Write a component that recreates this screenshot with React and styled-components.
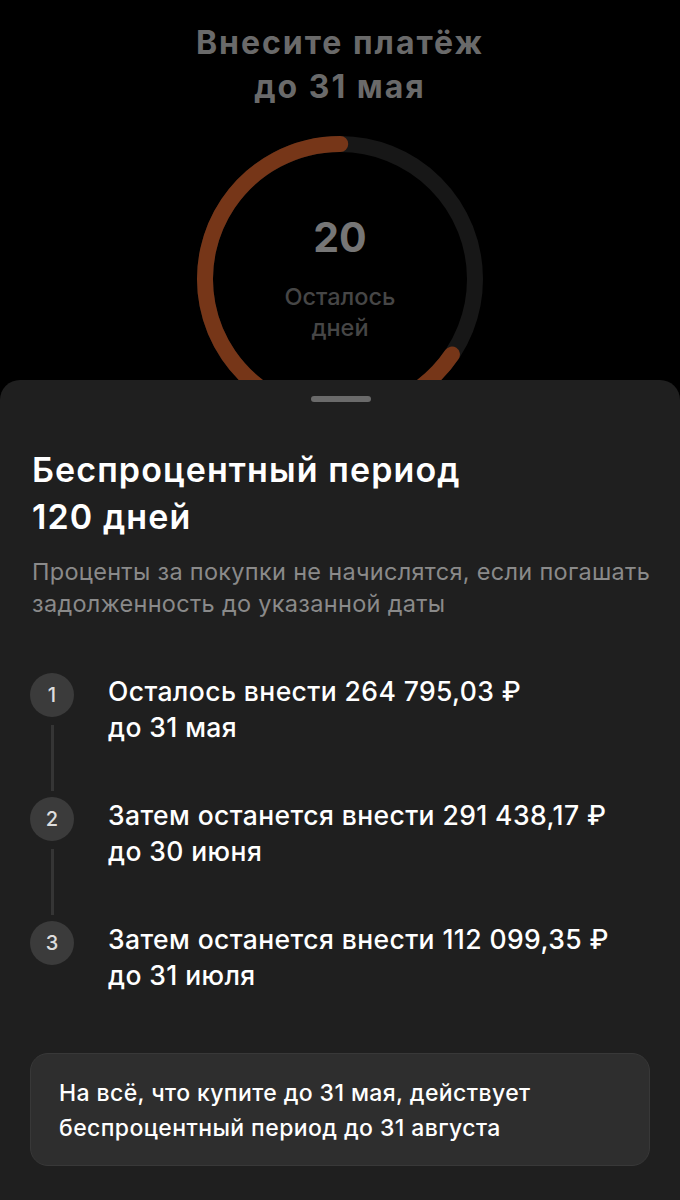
import styled, { createGlobalStyle } from "styled-components";

const GlobalStyle = createGlobalStyle`
  html, body {
    margin: 0;
    padding: 0;
    background: #000;
  }
  body {
    font-family: Inter, "Noto Sans", sans-serif;
    -webkit-font-smoothing: antialiased;
  }
`;

const Screen = styled.div`
  width: 680px;
  height: 1200px;
  overflow: hidden;
  background: #000;
  display: flex;
  flex-direction: column;
`;

const Top = styled.div`
  height: 380px;
  flex: 0 0 380px;
  overflow: hidden;
  display: flex;
  flex-direction: column;
  align-items: center;
  padding-top: 21px;
  box-sizing: border-box;
`;

const TopTitle = styled.h1`
  margin: 0;
  font-size: 32px;
  line-height: 44px;
  font-weight: 700;
  color: #6a6a6a;
  text-align: center;
  letter-spacing: 2px;
`;

const Ring = styled.div`
  margin-top: 20px;
  display: grid;
  width: 300px;
  height: 300px;
  flex: 0 0 300px;

  & > * {
    grid-area: 1 / 1;
  }
`;

const RingText = styled.div`
  display: flex;
  flex-direction: column;
  align-items: center;
  justify-content: center;
`;

const Days = styled.div`
  font-size: 41px;
  line-height: 44px;
  font-weight: 700;
  color: #767676;
  margin-bottom: 22px;
`;

const DaysLabel = styled.div`
  font-size: 23.5px;
  line-height: 31px;
  font-weight: 500;
  color: #464646;
  text-align: center;
`;

const Sheet = styled.div`
  flex: 1;
  background: #1f1f1f;
  border-radius: 20px 20px 0 0;
  padding: 16px 30px 0 32px;
  display: flex;
  flex-direction: column;
`;

const Handle = styled.div`
  align-self: center;
  width: 60px;
  height: 6px;
  border-radius: 3px;
  background: #6a6a6a;
`;

const Title = styled.h2`
  margin: 44px 0 0;
  font-size: 34px;
  line-height: 47px;
  font-weight: 600;
  color: #fff;
  letter-spacing: 1.1px;
`;

const Subtitle = styled.p`
  margin: 16px -10px 0 0;
  font-size: 23.5px;
  line-height: 32px;
  color: #8a8a8a;
  letter-spacing: 0.3px;
`;

const Steps = styled.div`
  margin-top: 53px;
  display: flex;
  flex-direction: column;
`;

const Step = styled.div`
  display: grid;
  grid-template-columns: 44px 1fr;
  column-gap: 34px;
  margin-left: -2px;
`;

const Marker = styled.div`
  display: flex;
  flex-direction: column;
  align-items: center;
`;

const Bullet = styled.div`
  width: 44px;
  height: 44px;
  border-radius: 50%;
  background: #3b3b3b;
  color: #ddd;
  font-size: 20px;
  font-weight: 500;
  display: flex;
  align-items: center;
  justify-content: center;
`;

const Connector = styled.div`
  width: 3px;
  flex: 1;
  background: #353535;
  margin: 8px 0 6px;
  visibility: ${(p) => (p.$hidden ? "hidden" : "visible")};
`;

const StepText = styled.div`
  font-size: 26.5px;
  line-height: 36px;
  font-weight: 500;
  color: #fff;
  padding-bottom: ${(p) => (p.$last ? "0" : "52px")};
  letter-spacing: 0.4px;
`;

const InfoBox = styled.div`
  margin: 60px 0 0 -2px;
  background: #2e2e2e;
  border: 1px solid #383838;
  border-radius: 18px;
  padding: 22px 28px 19px;
  font-size: 23px;
  line-height: 35px;
  color: #fff;
  font-weight: 500;
  letter-spacing: 0.4px;
`;

const steps = [
  { n: 1, line1: "Осталось внести 264 795,03 ₽", line2: "до 31 мая" },
  { n: 2, line1: "Затем останется внести 291 438,17 ₽", line2: "до 30 июня" },
  { n: 3, line1: "Затем останется внести 112 099,35 ₽", line2: "до 31 июля" },
];

const R = 135;
const C = 2 * Math.PI * R;
const done = (236 / 360) * C;

export default function App() {
  return (
    <>
      <GlobalStyle />
      <Screen>
        <Top>
          <TopTitle>
            Внесите платёж
            <br />
            до 31 мая
          </TopTitle>
          <Ring>
            <svg width="300" height="300" viewBox="0 0 300 300">
              <circle cx="150" cy="150" r={R} fill="none" stroke="#171717" strokeWidth="16" />
              <circle
                cx="150"
                cy="150"
                r={R}
                fill="none"
                stroke="#763618"
                strokeWidth="16"
                strokeLinecap="round"
                strokeDasharray={`${done} ${C}`}
                transform="rotate(34 150 150)"
              />
            </svg>
            <RingText>
              <Days>20</Days>
              <DaysLabel>
                Осталось
                <br />
                дней
              </DaysLabel>
            </RingText>
          </Ring>
        </Top>
        <Sheet>
          <Handle />
          <Title>
            Беспроцентный период
            <br />
            120 дней
          </Title>
          <Subtitle>
            Проценты за покупки не начислятся, если погашать
            <br />
            задолженность до указанной даты
          </Subtitle>
          <Steps>
            {steps.map((s, i) => (
              <Step key={s.n}>
                <Marker>
                  <Bullet>{s.n}</Bullet>
                  <Connector $hidden={i === steps.length - 1} />
                </Marker>
                <StepText $last={i === steps.length - 1}>
                  {s.line1}
                  <br />
                  {s.line2}
                </StepText>
              </Step>
            ))}
          </Steps>
          <InfoBox>
            На всё, что купите до 31 мая, действует
            <br />
            беспроцентный период до 31 августа
          </InfoBox>
        </Sheet>
      </Screen>
    </>
  );
}
